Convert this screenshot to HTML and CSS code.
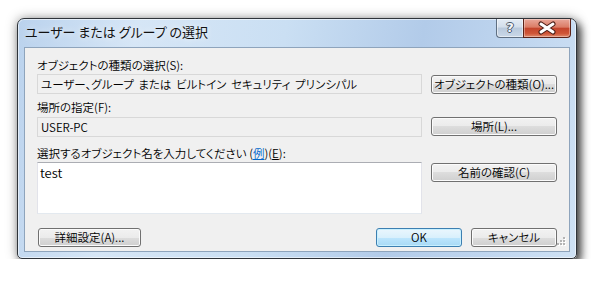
FILE: index.html
```html
<!DOCTYPE html>
<html lang="ja">
<head>
<meta charset="UTF-8">
<title>ユーザー または グループ の選択</title>
<link rel="stylesheet" href="styles.css">
</head>
<body>
<div id="desktop">
<div class="window">
  <div class="titlebar">
    <span class="title">ユーザー または グループ の選択</span>
    <div class="caption-buttons">
      <span class="caption-help">?</span>
      <span class="caption-close">
        <svg width="46" height="18" viewBox="0 0 46 18">
          <path d="M17 5 L29 13 M29 5 L17 13" stroke="#4a1c14" stroke-width="5" stroke-linecap="round"/>
          <path d="M17 5 L29 13 M29 5 L17 13" stroke="#fff" stroke-width="3" stroke-linecap="round"/>
        </svg>
      </span>
    </div>
  </div>

  <div class="client">
    <div class="label">オブジェクトの種類の選択(S):</div>
    <div class="field">ユーザー、グループ または ビルトイン セキュリティ プリンシパル</div>
    <div class="button">オブジェクトの種類(O)...</div>

    <div class="label label-low">場所の指定(F):</div>
    <div class="field">USER-PC</div>
    <div class="button">場所(L)...</div>

    <div class="label label-low">選択するオブジェクト名を入力してください (<a href="#">例</a>)(<u>E</u>):</div>
    <div class="names">test</div>
    <div class="button button-top">名前の確認(C)</div>

    <div class="footer">
      <div class="button btn-advanced">詳細設定(A)...</div>
      <div class="footer-right">
        <div class="button btn-default">OK</div>
        <div class="button btn-cancel">キャンセル</div>
      </div>
    </div>

    <svg class="grip" width="12" height="12" viewBox="0 0 12 12">
      <rect x="9" y="1" width="2" height="2" fill="#fff"/>
      <rect x="6" y="4" width="2" height="2" fill="#fff"/>
      <rect x="9" y="4" width="2" height="2" fill="#fff"/>
      <rect x="3" y="7" width="2" height="2" fill="#fff"/>
      <rect x="6" y="7" width="2" height="2" fill="#fff"/>
      <rect x="9" y="7" width="2" height="2" fill="#fff"/>
      <rect x="8" y="0" width="2" height="2" fill="#b4b4b4"/>
      <rect x="5" y="3" width="2" height="2" fill="#b4b4b4"/>
      <rect x="8" y="3" width="2" height="2" fill="#b4b4b4"/>
      <rect x="2" y="6" width="2" height="2" fill="#b4b4b4"/>
      <rect x="5" y="6" width="2" height="2" fill="#b4b4b4"/>
      <rect x="8" y="6" width="2" height="2" fill="#b4b4b4"/>
    </svg>
  </div>
</div>
</div>
</body>
</html>
```

FILE: styles.css
```css
body {
  margin:0;
  background:#fff;
  font-family:"Noto Sans CJK JP", "Liberation Sans", sans-serif;
  font-size:11.5px;
  font-weight:350;
  color:#000;
}

#desktop {
  padding:18px 0 0 17px;
}

.window {
  width:558px;
  height:239px;
  border:1px solid #2f343a;
  border-radius:7px 7px 5px 5px;
  background:linear-gradient(100deg, #bad2ed 0%, #d6e6f6 20%, #cadff3 45%, #b2cbe9 68%, #c0d6ef 85%, #cfe2f5 100%);
  box-shadow:inset 0 0 0 1px rgba(255,255,255,.55), 4px 5px 9px rgba(0,0,0,.7), 0 0 12px rgba(0,0,0,.35);
  display:flex;
  flex-direction:column;
}

.titlebar {
  height:28px;
  display:flex;
  align-items:flex-start;
  padding:0 5px 0 7px;
}

.title {
  margin-top:4px;
  font-size:13px;
  font-weight:400;
  line-height:18px;
  color:#111;
  font-feature-settings:"palt";
  text-shadow:0 0 6px rgba(255,255,255,.9);
}

.caption-buttons {
  margin-left:auto;
  display:flex;
}

.caption-help {
  width:27px;
  height:19px;
  box-sizing:border-box;
  border:1px solid #5f6f82;
  border-top:none;
  border-right:none;
  border-radius:0 0 0 4px;
  background:linear-gradient(#e4ecf5 0%, #d3deeb 45%, #b9c9dc 50%, #cad8e8 100%);
  box-shadow:inset 0 0 0 1px rgba(255,255,255,.5);
  text-align:center;
  font-family:"DejaVu Sans", sans-serif;
  font-weight:bold;
  font-size:13px;
  line-height:18px;
  color:#f4f7fa;
  text-shadow:1px 0 0 #4a586a, -1px 0 0 #4a586a, 0 1px 0 #4a586a, 0 -1px 0 #4a586a;
}

.caption-close {
  width:48px;
  height:19px;
  box-sizing:border-box;
  border:1px solid #5b2218;
  border-top:none;
  border-radius:0 0 4px 0;
  background:linear-gradient(#e9a89a 0%, #db7c66 45%, #c4452c 52%, #cf5537 80%, #e08a6c 100%);
  box-shadow:inset 0 0 0 1px rgba(255,255,255,.35);
}

.caption-close svg {
  display:block;
}

.client {
  position:relative;
  flex:1;
  margin:0 6px 6px;
  border:1px solid #8ea4bc;
  background:#f0f0f0;
  padding:10px 12px 0;
  display:grid;
  grid-template-columns:385px 126px;
  grid-template-rows:15px 22px 20px 23px 23px 54px auto;
  column-gap:9px;
}

.label {
  grid-column:1 / -1;
  line-height:15px;
  font-feature-settings:"palt";
  white-space:nowrap;
}

.label-low {
  align-self:end;
}

.label a {
  color:#0066cc;
}

.field {
  align-self:center;
  height:20px;
  box-sizing:border-box;
  border:1px solid #d8d8d8;
  background:#f0f0f0;
  padding:0 3px;
  line-height:18px;
  font-feature-settings:"palt";
  word-spacing:2px;
  white-space:nowrap;
  overflow:hidden;
}

.names {
  align-self:center;
  height:52px;
  box-sizing:border-box;
  border:1px solid #e2e3ea;
  border-top-color:#abadb3;
  border-bottom-color:#e3e9ef;
  background:#fff;
  padding:1px 2px;
  font-size:13px;
  line-height:17px;
}

.button {
  align-self:center;
  height:19px;
  box-sizing:border-box;
  border:1px solid #707070;
  border-radius:3px;
  background:linear-gradient(#f2f2f2 0%, #ebebeb 50%, #dddddd 50%, #cfcfcf 100%);
  box-shadow:inset 0 0 0 1px #fbfbfb;
  text-align:center;
  line-height:17px;
  font-feature-settings:"palt";
  white-space:nowrap;
}

.button-top {
  align-self:start;
  margin-top:2px;
}

.footer {
  grid-column:1 / -1;
  display:flex;
  margin-top:9px;
}

.btn-advanced {
  width:103px;
  margin-left:1px;
}

.footer-right {
  margin-left:auto;
  display:flex;
  gap:9px;
}

.btn-default,
.btn-cancel {
  width:86px;
}

.btn-default {
  border-color:#3c7fb1;
  background:linear-gradient(#eaf6fd 0%, #d9f0fc 50%, #bee6fd 50%, #a7d9f5 100%);
  box-shadow:inset 0 0 0 1px #c8f0ff;
}

.grip {
  position:absolute;
  right:2px;
  bottom:2px;
}
```
